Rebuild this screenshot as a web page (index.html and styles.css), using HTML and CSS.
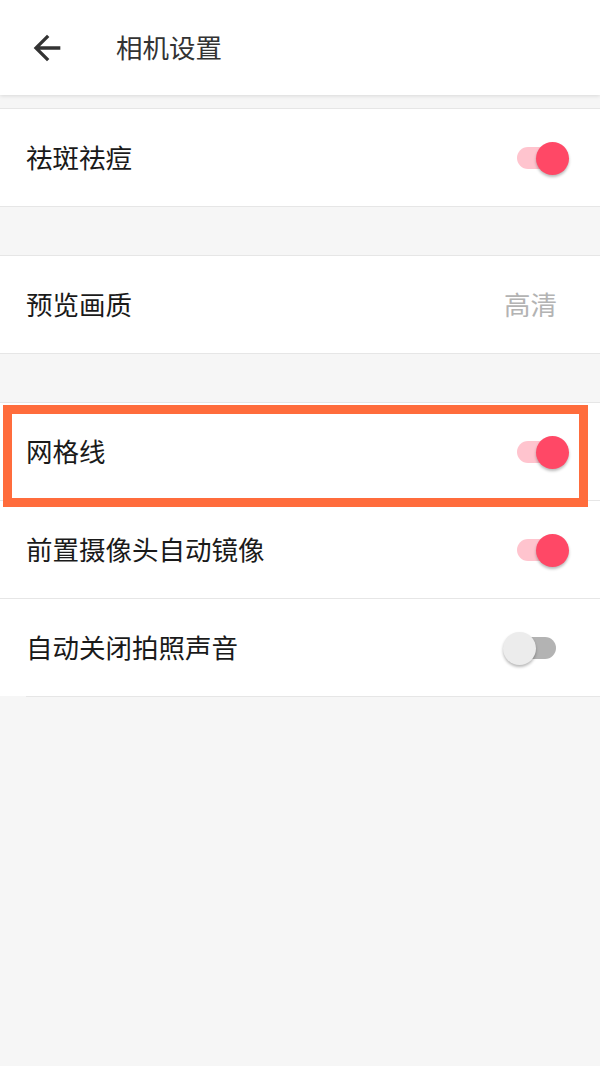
FILE: index.html
```html
<!DOCTYPE html>
<html lang="zh">
<head>
<meta charset="utf-8">
<title>相机设置</title>
<link rel="stylesheet" href="styles.css">
</head>
<body>
<header class="topbar">
  <svg class="back" viewBox="0 0 24 24" width="40" height="40"><path d="M20 11H7.83l5.59-5.59L12 4l-8 8 8 8 1.41-1.41L7.83 13H20v-2z" fill="#333"/></svg>
  <h1 class="title">相机设置</h1>
</header>
<main class="content">
  <section class="group first">
    <div class="row">
      <span class="label">祛斑祛痘</span>
      <span class="switch on"><span class="knob"></span></span>
    </div>
  </section>
  <section class="group">
    <div class="row">
      <span class="label">预览画质</span>
      <span class="value">高清</span>
    </div>
  </section>
  <section class="group last">
    <div class="row divided highlighted">
      <span class="label">网格线</span>
      <span class="switch on"><span class="knob"></span></span>
      <span class="highlight"></span>
    </div>
    <div class="row divided">
      <span class="label">前置摄像头自动镜像</span>
      <span class="switch on"><span class="knob"></span></span>
    </div>
    <div class="row">
      <span class="label">自动关闭拍照声音</span>
      <span class="switch"><span class="knob"></span></span>
    </div>
  </section>
  <div class="inset-line"></div>
</main>
</body>
</html>
```
FILE: styles.css
```css
html, body {
  margin: 0;
  padding: 0;
}
body {
  width: 600px;
  min-height: 1066px;
  background: #f6f6f6;
  font-family: "Noto Sans CJK SC", "Noto Sans", sans-serif;
}
.topbar {
  height: 95px;
  background: #fff;
  display: flex;
  align-items: center;
  box-shadow: 0 1px 4px rgba(0, 0, 0, 0.12);
  position: relative;
  z-index: 2;
}
.back {
  margin-left: 27px;
  flex: none;
}
.title {
  margin: 0 0 0 49px;
  font-size: 26.5px;
  font-weight: 400;
  color: #333;
  line-height: 1;
}
.content {
  padding-top: 13px;
  display: flex;
  flex-direction: column;
}
.group {
  background: #fff;
  border-top: 1px solid #e6e6e6;
  border-bottom: 1px solid #e6e6e6;
  margin-bottom: 48px;
}
.group.last {
  border-bottom: none;
  margin-bottom: 0;
}
.row {
  height: 97px;
  display: flex;
  align-items: center;
  justify-content: space-between;
  padding-left: 26px;
  position: relative;
}
.row.divided {
  border-bottom: 1px solid #e6e6e6;
}
.label {
  font-size: 26.5px;
  color: #1a1a1a;
  line-height: 1;
}
.value {
  font-size: 26.5px;
  color: #b3b3b3;
  line-height: 1;
  margin-right: 43px;
}
.switch {
  width: 39px;
  height: 22px;
  border-radius: 11px;
  background: #b3b3b3;
  margin-right: 44px;
  position: relative;
  flex: none;
}
.switch.on {
  background: #ffc4ce;
}
.knob {
  position: absolute;
  width: 33px;
  height: 33px;
  border-radius: 50%;
  top: -5px;
  left: -14px;
  background: #ececec;
  box-shadow: 0 2px 3px rgba(0, 0, 0, 0.28);
}
.switch.on .knob {
  left: 19px;
  background: #ff4866;
}
.highlight {
  position: absolute;
  left: 3px;
  top: 2px;
  width: 585px;
  height: 102px;
  box-sizing: border-box;
  border: 9px solid #ff6c3c;
  z-index: 1;
}
.inset-line {
  height: 1px;
  margin-left: 26px;
  background: #e6e6e6;
}
```
